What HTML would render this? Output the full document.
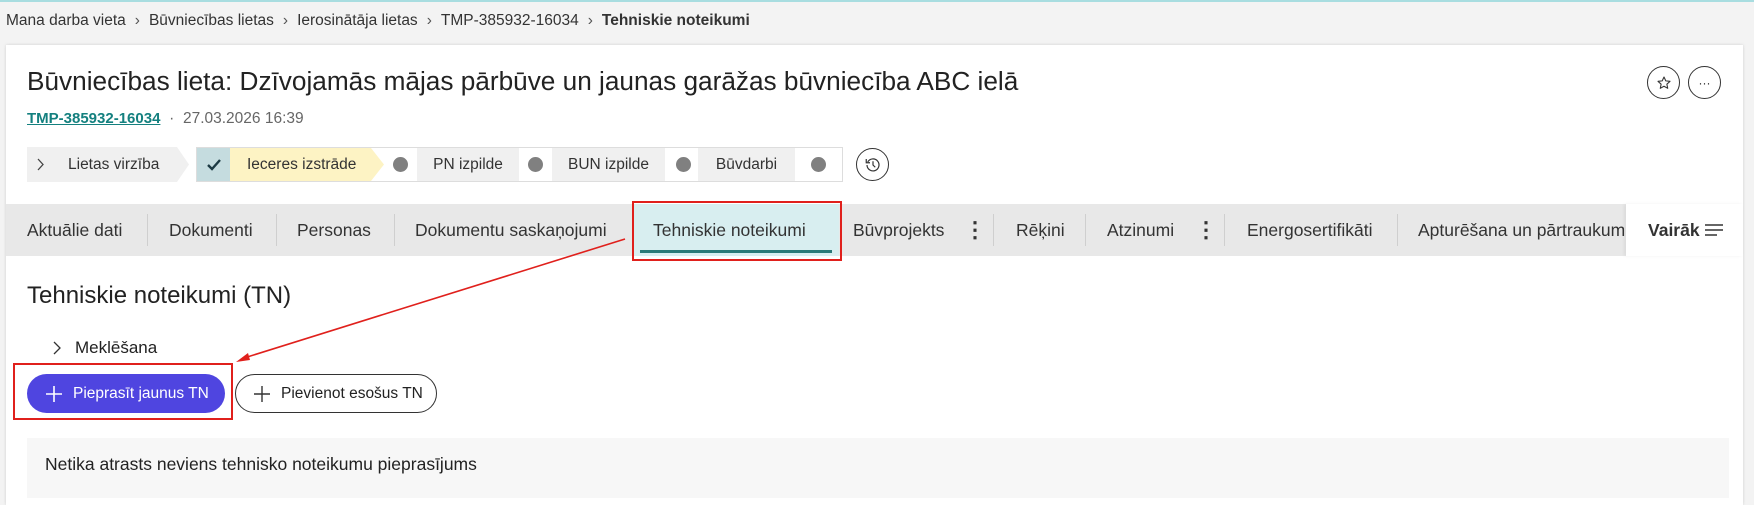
<!DOCTYPE html>
<html><head><meta charset="utf-8"><style>
*{box-sizing:border-box;margin:0;padding:0}
body{width:1754px;height:491px;overflow:hidden;background:#f3f3f3;font-family:"Liberation Sans",sans-serif;color:#222;position:relative}
.abs{position:absolute}
.topline{left:0;top:0;width:1754px;height:2px;background:#a8dde0}
.bc{left:6px;top:12px;font-size:15.5px;color:#333;white-space:nowrap}
.bc span.s{margin:0 9px;color:#555}
.card{left:6px;top:45px;width:1737px;height:460px;background:#fff;box-shadow:0 0 3px rgba(0,0,0,.15)}
.title{left:27px;top:66px;font-size:26.2px;color:#222;white-space:nowrap}
.circ{border:1px solid #333;border-radius:50%;width:33px;height:33px;display:flex;align-items:center;justify-content:center}
.meta{left:27px;top:110px;white-space:nowrap}
.meta a{color:#14807f;font-weight:bold;text-decoration:underline;font-size:15px}
.meta span{color:#666;font-size:15.5px}
.step{top:147px;height:35px;display:flex;align-items:center;font-size:15.5px;color:#333}
.dot{width:15px;height:15px;border-radius:50%;background:#808080;position:absolute;top:157px}
.tabs{left:0;top:204px;width:1743px;height:52px}
.tab{position:absolute;top:0;height:52px;display:flex;align-items:center;font-size:17.5px;color:#333;white-space:nowrap}
.sep{position:absolute;top:10px;width:1px;height:32px;background:#cfcfcf}
.red{border:2px solid #e0201c}
.btn{top:374px;height:39px;border-radius:20px;display:flex;align-items:center;font-size:15.5px;white-space:nowrap}
</style></head><body>
<div class="abs topline"></div>
<div class="abs bc">Mana darba vieta<span class="s">›</span>Būvniecības lietas<span class="s">›</span>Ierosinātāja lietas<span class="s">›</span>TMP-385932-16034<span class="s">›</span><b>Tehniskie noteikumi</b></div>
<div class="abs card"></div>
<div class="abs title">Būvniecības lieta: Dzīvojamās mājas pārbūve un jaunas garāžas būvniecība ABC ielā</div>
<div class="abs circ" style="left:1647px;top:66px"><svg width="16" height="16" viewBox="0 0 24 24"><path d="M12 3l2.7 5.8 6.3.7-4.7 4.3 1.3 6.2L12 16.9 6.4 20l1.3-6.2L3 9.5l6.3-.7z" fill="none" stroke="#333" stroke-width="1.6" stroke-linejoin="round"/></svg></div>
<div class="abs circ" style="left:1688px;top:66px;font-size:12px;line-height:1">···</div>
<div class="abs meta"><a>TMP-385932-16034</a> <span>&nbsp;·&nbsp; 27.03.2026 16:39</span></div>
<svg class="abs" style="left:27px;top:147px" width="170" height="35"><path d="M0 0H150L162 17.5 150 35H0z" fill="#f0f0f0"/><path d="M11 12l5 5.5-5 5.5" fill="none" stroke="#444" stroke-width="1.3"/></svg>
<div class="abs step" style="left:68px">Lietas virzība</div>
<div class="abs" style="left:196px;top:147px;width:647px;height:35px;border:1px solid #ddd"></div>
<div class="abs" style="left:197px;top:148px;width:33px;height:33px;background:#c5dcdf;display:flex;align-items:center;justify-content:center"><svg width="16" height="14" viewBox="0 0 16 14"><path d="M2 7l4 4 8-9" fill="none" stroke="#1d3b44" stroke-width="2.4"/></svg></div>
<svg class="abs" style="left:230px;top:148px" width="156" height="33"><path d="M0 0H141L154 16.5 141 33H0z" fill="#fdf3c4"/></svg>
<div class="abs step" style="left:247px">Ieceres izstrāde</div>
<div class="dot" style="left:393px"></div>
<div class="abs step" style="left:417px;width:102px;top:148px;height:33px;background:#f0f0f0;justify-content:center">PN izpilde</div>
<div class="dot" style="left:528px"></div>
<div class="abs step" style="left:552px;width:113px;top:148px;height:33px;background:#f0f0f0;justify-content:center">BUN izpilde</div>
<div class="dot" style="left:676px"></div>
<div class="abs step" style="left:698px;width:97px;top:148px;height:33px;background:#f0f0f0;justify-content:center">Būvdarbi</div>
<div class="dot" style="left:811px"></div>
<div class="abs circ" style="left:856px;top:148px"><svg width="18" height="18" viewBox="0 0 24 24"><path d="M5 8A8 8 0 1 1 4 12" fill="none" stroke="#333" stroke-width="1.6"/><path d="M3 4v5h5" fill="none" stroke="#333" stroke-width="1.6"/><path d="M12 7v5l3 3" fill="none" stroke="#333" stroke-width="1.6"/></svg></div>
<div class="abs tabs">
<div class="abs" style="left:6px;top:0;width:1620px;height:52px;background:#e8e8e8"></div>
<div class="tab" style="left:27px">Aktuālie dati</div><div class="sep" style="left:147px"></div>
<div class="tab" style="left:169px">Dokumenti</div><div class="sep" style="left:276px"></div>
<div class="tab" style="left:297px">Personas</div><div class="sep" style="left:394px"></div>
<div class="tab" style="left:415px">Dokumentu saskaņojumi</div>
<div class="tab" style="left:633px;width:206px;background:#d8eef0;padding-left:20px">Tehniskie noteikumi<div style="position:absolute;left:7px;right:7px;bottom:3px;height:3px;background:#2b7a78"></div></div>
<div class="tab" style="left:853px">Būvprojekts</div><div class="tab" style="left:964px;font-weight:bold;font-size:22px">⋮</div><div class="sep" style="left:993px"></div>
<div class="tab" style="left:1016px">Rēķini</div><div class="sep" style="left:1085px"></div>
<div class="tab" style="left:1107px">Atzinumi</div><div class="tab" style="left:1195px;font-weight:bold;font-size:22px">⋮</div><div class="sep" style="left:1224px"></div>
<div class="tab" style="left:1247px">Energosertifikāti</div><div class="sep" style="left:1397px"></div>
<div class="tab" style="left:1418px;width:208px;overflow:hidden">Apturēšana un pārtraukumi</div>
<div class="tab" style="left:1626px;width:117px;background:#fff;padding-left:22px;font-weight:bold;box-shadow:-2px 0 3px rgba(0,0,0,.06)">Vairāk<svg style="margin-left:4px" width="20" height="14"><path d="M1 2h18M1 7h18M1 12h12" stroke="#333" stroke-width="1.4"/></svg></div>
</div>
<div class="abs red" style="left:632px;top:201px;width:210px;height:60px"></div>
<div class="abs" style="left:27px;top:282px;font-size:24px;color:#222">Tehniskie noteikumi (TN)</div>
<svg class="abs" style="left:52px;top:340px" width="10" height="16"><path d="M2 2l6 6-6 6" fill="none" stroke="#333" stroke-width="1.3"/></svg>
<div class="abs" style="left:75px;top:338px;font-size:17px">Meklēšana</div>
<div class="abs red" style="left:13px;top:363px;width:220px;height:57px"></div>
<div class="abs btn" style="left:27px;width:198px;background:#4f45e0;color:#fff;padding-left:18px"><svg width="18" height="18"><path d="M9 1v16M1 9h16" stroke="#fff" stroke-width="1.6"/></svg><span style="margin-left:10px">Pieprasīt jaunus TN</span></div>
<div class="abs btn" style="left:235px;width:202px;border:1px solid #333;color:#222;padding-left:17px"><svg width="18" height="18"><path d="M9 1v16M1 9h16" stroke="#333" stroke-width="1.4"/></svg><span style="margin-left:10px">Pievienot esošus TN</span></div>
<div class="abs" style="left:27px;top:438px;width:1702px;height:60px;background:#f7f7f7"></div>
<div class="abs" style="left:45px;top:454px;font-size:17.5px;color:#222">Netika atrasts neviens tehnisko noteikumu pieprasījums</div>
<svg class="abs" style="left:0;top:0" width="1754" height="491"><line x1="625" y1="239" x2="244" y2="358" stroke="#e0201c" stroke-width="1.6"/><path d="M236 362l12-9 2 7z" fill="#e0201c"/></svg>
</body></html>
